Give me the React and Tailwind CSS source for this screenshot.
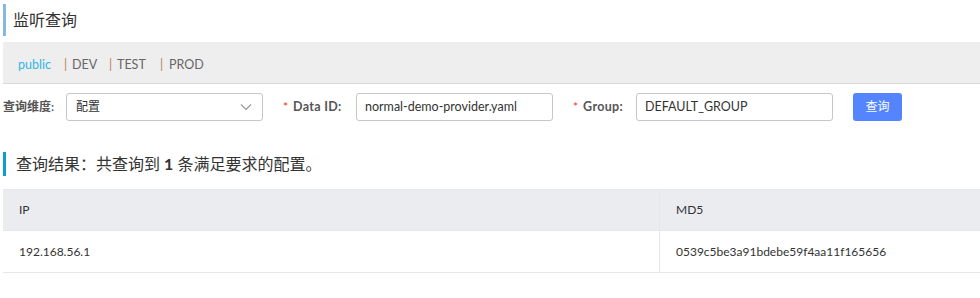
export default function App() {
  const font = { fontFamily: 'Lato, "Noto Sans CJK SC", sans-serif' };
  return (
    <div className="w-[980px] h-[298px] bg-white text-[#333] overflow-hidden" style={font}>
      <div className="pl-[3px] pt-[4px]">
        <div className="border-l-[3px] border-[#88b7e0] h-[32px] flex items-center pl-[7px] text-[16px] text-[#333]">
          监听查询
        </div>
      </div>
      <div className="ml-[3px] mt-[6px] h-[42px] bg-[#eeeeee] border-b border-[#d9d9d9] flex items-center pl-[15px] pt-[6px] text-[12.5px] text-[#666]">
        <span className="w-[46px] text-[#2eb7e5]">public</span>
        <span className="w-[8px] text-[#b9804c]">|</span>
        <span className="w-[37px]">DEV</span>
        <span className="w-[8px] text-[#b9804c]">|</span>
        <span className="w-[43px]">TEST</span>
        <span className="w-[9px] text-[#b9804c]">|</span>
        <span>PROD</span>
      </div>
      <div className="flex items-center mt-[9px] h-[28px] pl-[3px] text-[12px]">
        <span className="font-bold text-[#555] w-[63px]">查询维度:</span>
        <div className="w-[197px] h-[28px] border border-[#c4c6cf] rounded-[3px] flex items-center justify-between px-[9px]">
          <span className="text-[#333]">配置</span>
          <svg width="14" height="14" viewBox="0 0 14 14" fill="none" stroke="#999" strokeWidth="1.2">
            <path d="M2 4.5 L7 9.5 L12 4.5" />
          </svg>
        </div>
        <div className="w-[93px] pl-[20px] flex items-center">
          <span className="text-[#ff3000]">*</span>
          <span className="ml-[5px] font-bold text-[#555] text-[12.5px] tracking-[0.3px]">Data ID:</span>
        </div>
        <div className="w-[197px] h-[28px] border border-[#c4c6cf] rounded-[3px] flex items-center px-[8px] text-[#333] text-[12.5px]">
          normal-demo-provider.yaml
        </div>
        <div className="w-[83px] pl-[20px] flex items-center">
          <span className="text-[#ff3000]">*</span>
          <span className="ml-[5px] font-bold text-[#555] text-[12.5px] tracking-[0.3px]">Group:</span>
        </div>
        <div className="w-[197px] h-[28px] border border-[#c4c6cf] rounded-[3px] flex items-center px-[8px] text-[#333] text-[12.5px]">
          DEFAULT_GROUP
        </div>
        <button className="ml-[20px] w-[49px] h-[28px] bg-[#5584ff] text-white rounded-[3px] text-[12px]">
          查询
        </button>
      </div>
      <div className="pl-[3px] mt-[31px]">
        <div className="border-l-[3px] border-[#0aa0d6] h-[24px] flex items-center pl-[10px] text-[16px] text-[#333]">
          <span>查询结果：共查询到 <b>1</b> 条满足要求的配置。</span>
        </div>
      </div>
      <div className="ml-[3px] mt-[13px] text-[12px] text-[#333]">
        <div className="flex h-[42px] bg-[#ebecf0] border-y border-[#e6e7eb]">
          <div className="w-[657px] border-r border-[#e6e7eb] flex items-center pl-[16px]">IP</div>
          <div className="flex-1 flex items-center pl-[16px]">MD5</div>
        </div>
        <div className="flex h-[42px] border-b border-[#e6e7eb]">
          <div className="w-[657px] border-r border-[#e6e7eb] flex items-center pl-[16px]">192.168.56.1</div>
          <div className="flex-1 flex items-center pl-[16px]">0539c5be3a91bdebe59f4aa11f165656</div>
        </div>
      </div>
    </div>
  );
}
